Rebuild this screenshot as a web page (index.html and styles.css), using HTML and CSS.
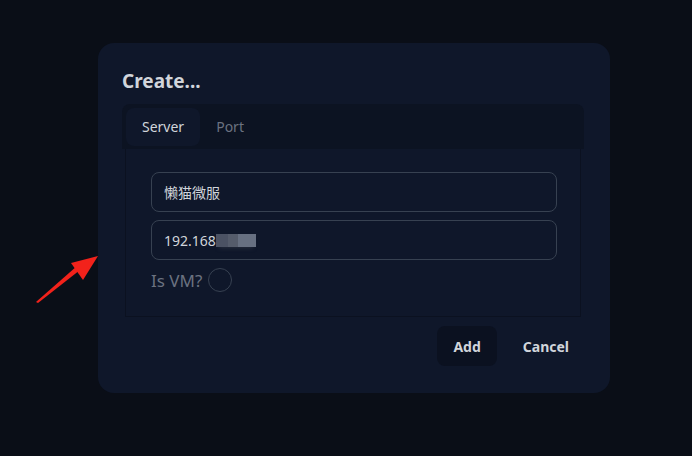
FILE: index.html
```html
<!DOCTYPE html>
<html lang="en">
<head>
    <meta charset="UTF-8">
    <title>Create</title>
    <link rel="stylesheet" href="styles.css">
</head>
<body>
    <svg class="pointer-arrow" width="110" height="60" viewBox="0 0 110 60">
        <polygon points="36,47 38,48 80,15 77,11" fill="#f2221b"/>
        <polygon points="98,1 71,8 83,25" fill="#f2221b"/>
    </svg>

    <div class="dialog">
        <h2 class="dialog-title">Create...</h2>

        <div class="tabs">
            <div class="tab-list">
                <div class="tab active">Server</div>
                <div class="tab">Port</div>
            </div>
            <div class="tab-panel">
                <div class="field">
                    <span>懒猫微服</span>
                </div>
                <div class="field">
                    <span>192.168</span><span class="masked"></span>
                </div>
                <label class="check-row">
                    <span>Is VM?</span>
                    <span class="radio"></span>
                </label>
            </div>
        </div>

        <div class="dialog-actions">
            <button class="btn btn-add">Add</button>
            <button class="btn">Cancel</button>
        </div>
    </div>
</body>
</html>
```

FILE: styles.css
```css
:root {
    --bg-page: #0a0e17;
    --bg-dialog: #0f172a;
    --bg-dark: #0c1322;
    --border: #374151;
    --text: #d1d5db;
    --muted: #6b7280;
}

body {
    margin: 0;
    height: 456px;
    background: var(--bg-page);
    color: var(--text);
    font-family: "Noto Sans", "Noto Sans CJK SC", sans-serif;
    position: relative;
    overflow: hidden;
}

.pointer-arrow {
    position: absolute;
    left: 0;
    top: 255px;
}

/* Dialog */
.dialog {
    margin: 43px 0 0 98px;
    width: 512px;
    height: 350px;
    box-sizing: border-box;
    padding: 24px;
    background: var(--bg-dialog);
    border-radius: 16px;
}

.dialog-title {
    margin: 0 0 9px 0;
    font-size: 19px;
    line-height: 28px;
    font-weight: 700;
    color: var(--text);
}

/* Tabs */
.tabs {
    width: 462px;
}

.tab-list {
    display: flex;
    padding: 4px 4px 3px 4px;
    background: var(--bg-dark);
    border-radius: 8px 8px 0 0;
}

.tab {
    height: 38px;
    line-height: 37px;
    padding: 0 16px;
    font-size: 14px;
    color: var(--muted);
    border-radius: 8px;
}

.tab.active {
    background: var(--bg-dialog);
    color: var(--text);
}

.tab-panel {
    margin: 0 3px;
    padding: 23px 23px 0 25px;
    height: 168px;
    box-sizing: border-box;
    border: 1px solid #0b1120;
    border-top: none;
    display: flex;
    flex-direction: column;
    gap: 8px;
}

.field {
    height: 40px;
    box-sizing: border-box;
    border: 1px solid var(--border);
    border-radius: 8px;
    padding: 0 12px;
    display: flex;
    align-items: center;
    font-size: 14px;
    color: var(--text);
}

.masked {
    display: inline-block;
    width: 40px;
    height: 13px;
    margin-top: 1px;
    background: linear-gradient(90deg, #4b5263 0 12px, #555c6b 12px 22px, #677081 22px 40px);
    box-shadow: 0 4px 4px -3px #2a3140;
}

.check-row {
    display: flex;
    align-items: center;
    gap: 6px;
    height: 24px;
    font-size: 17px;
    color: var(--muted);
}

.radio {
    width: 24px;
    height: 24px;
    box-sizing: border-box;
    border: 1.5px solid var(--border);
    border-radius: 50%;
}

/* Actions */
.dialog-actions {
    display: flex;
    justify-content: flex-end;
    gap: 10px;
    margin-top: 9px;
    padding-right: 1px;
}

.btn {
    height: 40px;
    padding: 0 16px;
    border: none;
    border-radius: 8px;
    background: transparent;
    color: var(--text);
    font-family: inherit;
    font-size: 14px;
    font-weight: 700;
}

.btn-add {
    background: #0b1120;
}
```
